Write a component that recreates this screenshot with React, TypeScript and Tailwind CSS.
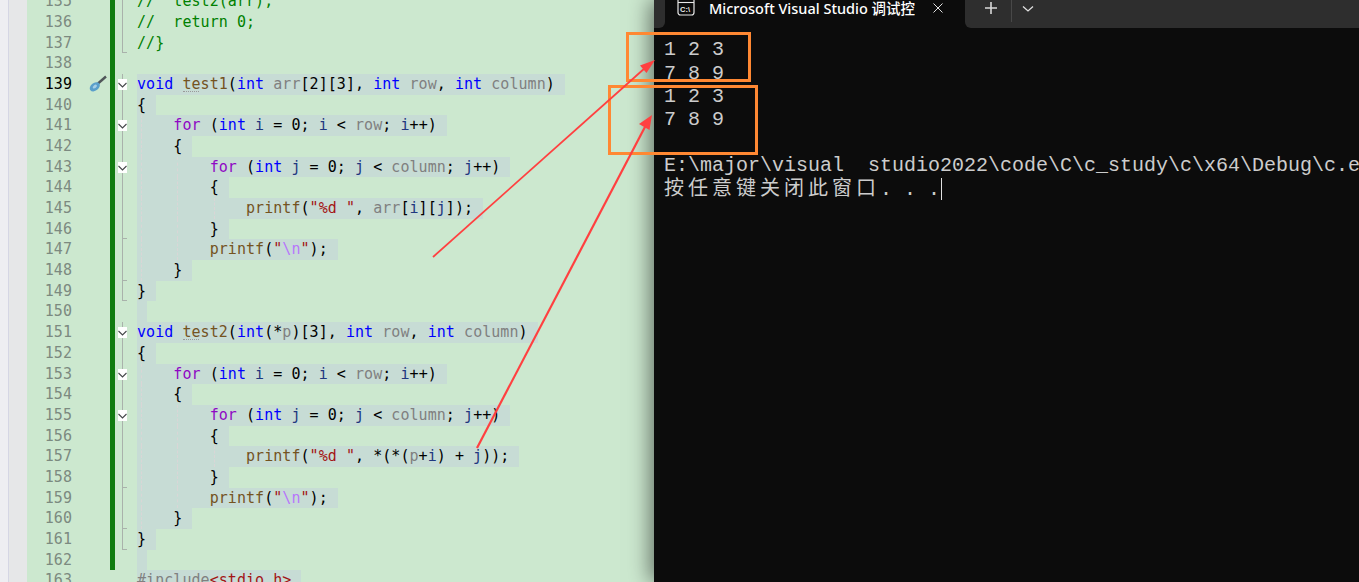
import React from "react";

type Tok = [string, string];
const K = "text-[#0000ff]";
const C = "text-[#8f08c4]";
const F = "text-[#74531f]";
const P = "text-[#808080]";
const V = "text-[#1f377f]";
const S = "text-[#a31515]";
const E = "text-[#b776fb]";
const D = "text-[#000000]";
const G = "text-[#008000]";
const I = "text-[#808080]";

const forI = (name: string, v: string, ind: string): Tok[] => [
  [ind, D], ["for", C], [" (", D], ["int", K], [" ", D], [v, V], [" = 0; ", D], [v, V], [" < ", D], [name, P], ["; ", D], [v, V], ["++)", D],
];

type Row = { n: number; t: Tok[]; sel?: boolean; fold?: "open" | "bar" | "end" | "none"; guides?: number };

const test = (start: number, sig: Tok[], body: Tok[]): Row[] => [
  { n: start, t: sig, sel: true, fold: "open" },
  { n: start + 1, t: [["{", D]], sel: true, fold: "bar" },
  { n: start + 2, t: forI("row", "i", "    "), sel: true, fold: "open", guides: 1 },
  { n: start + 3, t: [["    {", D]], sel: true, fold: "bar", guides: 1 },
  { n: start + 4, t: forI("column", "j", "        "), sel: true, fold: "open", guides: 2 },
  { n: start + 5, t: [["        {", D]], sel: true, fold: "bar", guides: 2 },
  { n: start + 6, t: body, sel: true, fold: "bar", guides: 3 },
  { n: start + 7, t: [["        }", D]], sel: true, fold: "end", guides: 2 },
  { n: start + 8, t: [["        ", D], ["printf", F], ["(", D], ['"', S], ["\\n", E], ['"', S], [");", D]], sel: true, fold: "bar", guides: 2 },
  { n: start + 9, t: [["    }", D]], sel: true, fold: "end", guides: 1 },
  { n: start + 10, t: [["}", D]], sel: true, fold: "end" },
];

const rows: Row[] = [
  { n: 135, t: [["//  test2(arr);", G]], fold: "bar" },
  { n: 136, t: [["//  return 0;", G]], fold: "bar" },
  { n: 137, t: [["//}", G]], fold: "end" },
  { n: 138, t: [], fold: "none" },
  ...test(
    139,
    [["void", K], [" ", D], ["test1", F], ["(", D], ["int", K], [" ", D], ["arr", P], ["[2][3], ", D], ["int", K], [" ", D], ["row", P], [", ", D], ["int", K], [" ", D], ["column", P], [")", D]],
    [["            ", D], ["printf", F], ["(", D], ['"%d "', S], [", ", D], ["arr", P], ["[", D], ["i", V], ["][", D], ["j", V], ["]);", D]],
  ),
  { n: 150, t: [], sel: true, fold: "none" },
  ...test(
    151,
    [["void", K], [" ", D], ["test2", F], ["(", D], ["int", K], ["(*", D], ["p", P], [")[3], ", D], ["int", K], [" ", D], ["row", P], [", ", D], ["int", K], [" ", D], ["column", P], [")", D]],
    [["            ", D], ["printf", F], ["(", D], ['"%d "', S], [", *(*(", D], ["p", P], ["+", D], ["i", V], [") + ", D], ["j", V], ["));", D]],
  ),
  { n: 162, t: [], sel: true, fold: "none" },
  { n: 163, t: [["#include", I], ["<stdio.h>", "text-[#a31515]"]], sel: true, fold: "none" },
];

function FoldMark({ kind }: { kind: Row["fold"] }) {
  return (
    <div className="relative w-[22px] h-full shrink-0">
      {kind !== "none" && <div className="absolute left-[7px] top-0 bottom-0 w-px bg-[#a9b2ab]" />}
      {kind === "end" && <div className="absolute left-[7px] bottom-0 w-[5px] h-px bg-[#a9b2ab]" />}
      {kind === "open" && (
        <div className="absolute left-[3px] top-[5px] w-[9px] h-[11px] bg-white flex items-center justify-center">
          <svg width="9" height="11" viewBox="0 0 9 11" fill="none">
            <path d="M0.5 4 L4.5 8 L8.5 4" stroke="#44474a" strokeWidth="1.1" />
          </svg>
        </div>
      )}
    </div>
  );
}

function CodeRow({ r }: { r: Row }) {
  const isFunc = r.n === 139 || r.n === 151;
  const green = r.n <= 162;
  return (
    <div className="flex h-[20.68px] items-stretch">
      <div className={`w-[45px] text-right shrink-0 leading-[20.68px] ${r.n === 139 ? "text-[#000000]" : "text-[#7c8a80]"}`}>{r.n}</div>
      <div className="w-[38px] shrink-0 flex items-center justify-end pr-[3px]">
        {r.n === 139 && (
          <svg width="18" height="18" viewBox="0 0 18 18">
            <path d="M9 8.5 L17 1.5" stroke="#50565a" strokeWidth="2.4" />
            <ellipse cx="5.8" cy="11.8" rx="5.6" ry="3.9" transform="rotate(-38 5.8 11.8)" fill="#5a9fcb" />
            <ellipse cx="5.8" cy="11.6" rx="2.4" ry="1.5" transform="rotate(-38 5.8 11.6)" fill="#a6cfe6" />
          </svg>
        )}
      </div>
      <div className={`w-[5px] shrink-0 ${green ? "bg-[#107c10]" : ""}`} />
      <FoldMark kind={r.fold} />
      <div className="relative whitespace-pre leading-[20.68px]">
        <div className={`inline-block h-[20.68px] align-top pr-[10px] ${r.sel ? "bg-[#c7dcd5]" : ""}`}>
          {r.t.map(([s, c], i) => (
            <span key={i} className={c}>{s}</span>
          ))}
        </div>
        {isFunc && <div className="absolute left-[46px] top-[17px] w-[16px] border-t border-dotted border-[#9a9a9a]" />}
        {Array.from({ length: r.guides ?? 0 }).map((_, i) => (
          <div key={i} className="absolute top-0 bottom-0 w-0 border-l border-dashed border-[#d9d6d6]" style={{ left: 4 + i * 36.4 }} />
        ))}
      </div>
    </div>
  );
}

export default function App() {
  return (
    <div className="relative flex w-[1359px] h-[582px] overflow-hidden bg-[#cce8cf]">
      <div className="w-[654px] h-full flex shrink-0 overflow-hidden">
        <div className="w-[8px] shrink-0 bg-[#eeeef2] border-r border-[#d5d6e4] box-content" />
        <div className="w-[18px] shrink-0 bg-[#e6e7e8]" />
        <div
          className="flex-1 -mt-[8.6px]"
          style={{ fontFamily: '"DejaVu Sans Mono", monospace', fontSize: 15, letterSpacing: "0.05px" }}
        >
          {rows.map((r) => (
            <CodeRow key={r.n} r={r} />
          ))}
        </div>
      </div>

      <div className="relative z-10 flex-1 min-w-0 flex flex-col bg-[#0c0c0c] shadow-[-4px_0_20px_rgba(0,0,0,0.5)]">
        <div className="h-[28px] flex shrink-0 text-white">
          <div className="w-[11px] bg-[#2e2e2e] rounded-br-[6px]" />
          <div className="w-[300px] flex items-start pl-[12px]">
            <svg width="18" height="16" viewBox="0 0 18 16" fill="none" className="shrink-0">
              <rect x="1" y="-2" width="16" height="17" rx="2.5" stroke="#e8e8e8" strokeWidth="1.2" />
              <path d="M1 2.5 H17" stroke="#e8e8e8" strokeWidth="1.1" />
              <text x="3" y="12" fontSize="7.5" fontWeight="700" fill="#e8e8e8" fontFamily='"Liberation Sans", sans-serif'>C:\</text>
            </svg>
            <span
              className="ml-[14px] text-[14.5px] leading-[17px] font-medium whitespace-nowrap w-[206px] overflow-hidden"
              style={{ fontFamily: '"Noto Sans", "Noto Sans CJK SC", sans-serif' }}
            >
              Microsoft Visual Studio 调试控
            </span>
            <svg width="10" height="10" viewBox="0 0 10 10" className="ml-[18px] mt-[3px]">
              <path d="M0.5 0.5 L9.5 9.5 M9.5 0.5 L0.5 9.5" stroke="#e0e0e0" strokeWidth="1" />
            </svg>
          </div>
          <div className="flex-1 bg-[#2e2e2e] rounded-bl-[6px] flex items-start pl-[19px] pt-[1px]">
            <svg width="14" height="14" viewBox="0 0 14 14">
              <path d="M7 1 V13 M1 7 H13" stroke="#d8d8d8" strokeWidth="1.6" />
            </svg>
            <div className="w-px h-[22px] bg-[#484848] ml-[13px] -mt-[1px]" />
            <svg width="12" height="10" viewBox="0 0 12 10" className="ml-[10px] mt-[3px]">
              <path d="M1 2.5 L6 7 L11 2.5" stroke="#e0e0e0" strokeWidth="1.3" fill="none" />
            </svg>
          </div>
        </div>
        <div
          className="pl-[10px] pt-[10.4px] text-[#cccccc] text-[20px] leading-[23.2px] whitespace-pre"
          style={{ fontFamily: '"Liberation Mono", "Noto Sans CJK SC", monospace' }}
        >
          <div>1 2 3</div>
          <div>7 8 9</div>
          <div>1 2 3</div>
          <div>7 8 9</div>
          <div>&nbsp;</div>
          <div>E:\major\visual  studio2022\code\C\c_study\c\x64\Debug\c.exe</div>
          <div className="flex items-center">
            <span className="tracking-[4px]">按任意键关闭此窗口</span>
            <span>. . .</span>
            <span className="w-px h-[22px] bg-[#e0e0e0] ml-px" />
          </div>
        </div>
      </div>

      <div className="absolute z-20 left-[626px] top-[32px] w-[125px] h-[50px] border-[3px] border-[#ff8833]" />
      <div className="absolute z-20 left-[608px] top-[85px] w-[150px] h-[70px] border-[3px] border-[#ff8833]" />
      <svg className="absolute z-30 left-0 top-0 pointer-events-none" width="1359" height="582" viewBox="0 0 1359 582" fill="none">
        <path d="M433 257 L645 68" stroke="#ff4040" strokeWidth="1.8" />
        <path d="M655 60 L640 65.5 L646.5 73 Z" fill="#ff4040" />
        <path d="M477 448 L646 125" stroke="#ff4040" strokeWidth="2.2" />
        <path d="M652 115 L639 124 L649.5 130 Z" fill="#ff4040" />
      </svg>
    </div>
  );
}
